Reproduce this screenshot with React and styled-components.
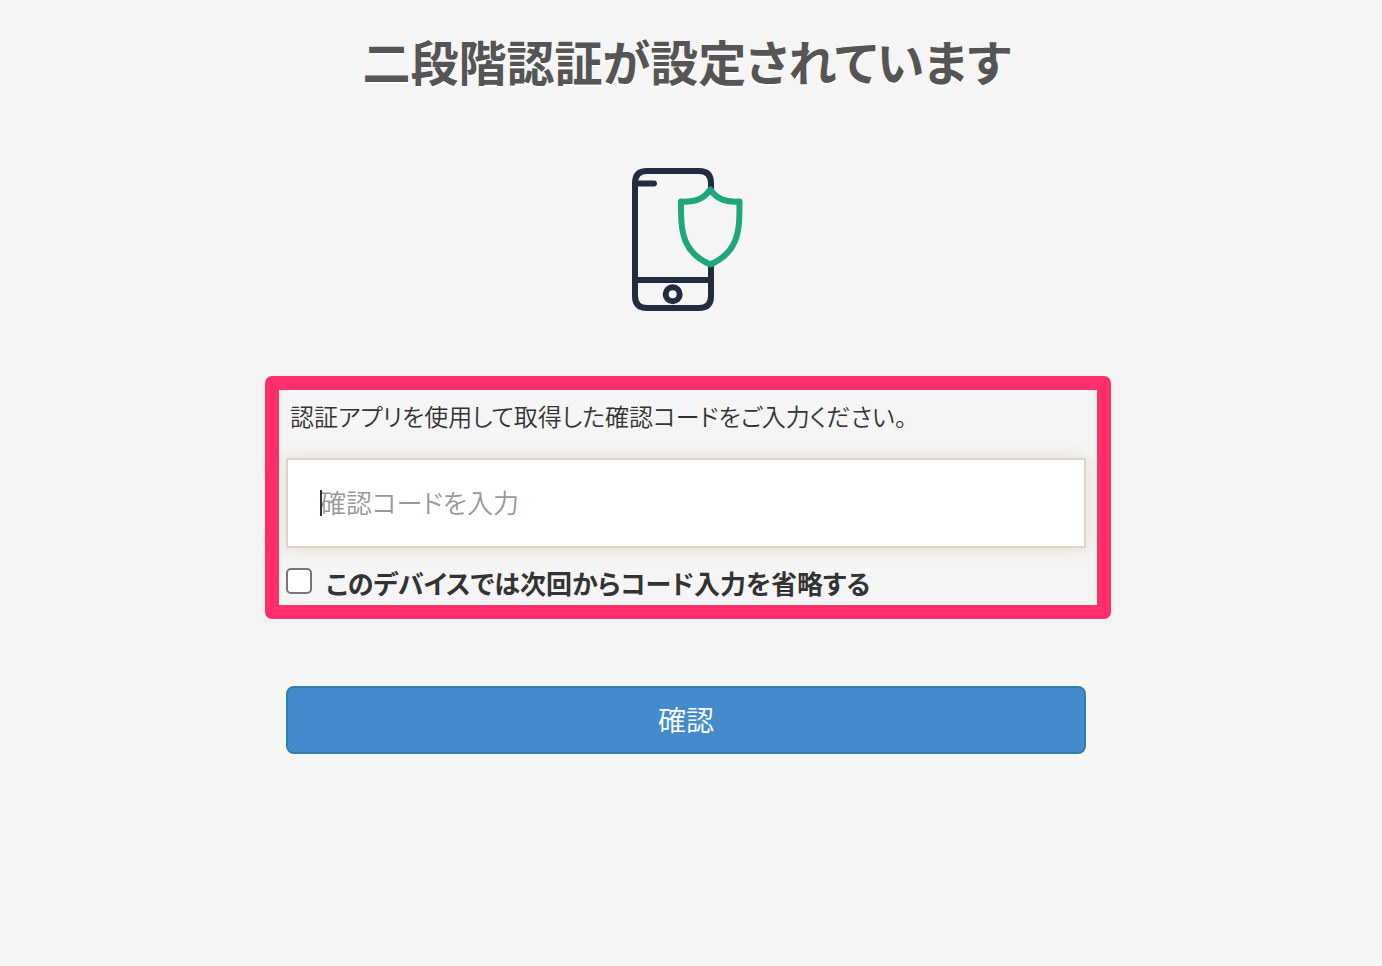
import React, { useState } from 'react';

import styled, { createGlobalStyle } from 'styled-components';

const Colors = {
  background: '#f5f5f5',
  title: '#555555',
  text: '#333333',
  placeholder: '#999999',
  highlight: '#ff2e6c',
  inputBorder: '#ddd5c9',
  inputGlow: 'rgba(190, 150, 90, 0.26)',
  blue: '#458bcc',
  blueBorder: '#2f7fa8',
  navy: '#232c3f',
  green: '#1ea77d',
};

const GlobalStyle = createGlobalStyle`
  * {
    box-sizing: border-box;
  }
  body {
    margin: 0;
    background-color: ${Colors.background};
    color: ${Colors.text};
    font-family: 'Noto Sans CJK JP', sans-serif;
    font-weight: 350;
    font-feature-settings: 'palt';
  }
`;

const Page = styled.main`
  display: flex;
  flex-direction: column;
  align-items: center;
  padding: 24px 22px 40px 16px;
`;

const Header = styled.header`
  display: flex;
  flex-direction: column;
  align-items: center;
  padding-right: 3px;
`;
const Title = styled.h1`
  margin: 0;
  font-size: 48px;
  line-height: 72px;
  font-weight: 700;
  color: ${Colors.title};
  text-shadow: 0 2px 0 #ffffff;
`;

const Icon = styled.svg`
  display: block;
  width: 112px;
  height: 146px;
  margin: 71px 0 63px;
`;

const Form = styled.form`
  width: 100%;
  max-width: 846px;
`;

// code input area
const CodeBox = styled.div`
  padding: 8px 11px 6px 7px;
  border: 14px solid ${Colors.highlight};
  border-radius: 7px;
`;
const CodeLabel = styled.label`
  display: block;
  padding-left: 4px;
  margin-bottom: 24px;
  font-size: 24px;
  line-height: 36px;
`;
const InputBox = styled.div`
  position: relative;
  margin-bottom: 19px;
`;
const CodeInput = styled.input`
  display: block;
  width: 100%;
  height: 90px;
  padding: 0 32px 4px;
  border: 2px solid ${Colors.inputBorder};
  border-radius: 0;
  outline: none;
  background-color: #ffffff;
  box-shadow: 0 0 16px ${Colors.inputGlow};
  font-family: inherit;
  font-size: 26px;
  font-weight: inherit;
  font-feature-settings: inherit;
  color: ${Colors.text};
  &::placeholder {
    color: ${Colors.placeholder};
    opacity: 1;
  }
`;
const Caret = styled.span`
  position: absolute;
  left: 34px;
  top: 32px;
  width: 2px;
  height: 26px;
  background-color: ${Colors.text};
`;

const CheckLabel = styled.label`
  display: flex;
  align-items: center;
  gap: 14px;
  font-size: 26px;
  line-height: 32px;
  font-weight: 700;
`;
const CheckBox = styled.input`
  appearance: none;
  flex: none;
  width: 26px;
  height: 26px;
  margin: 0 0 4px;
  border: 2px solid #767676;
  border-radius: 5px;
  background-color: #ffffff;
  &:checked {
    background-color: ${Colors.blue};
  }
`;

const ButtonRow = styled.div`
  padding: 67px 25px 0 21px;
`;
const SubmitButton = styled.button`
  display: block;
  width: 100%;
  height: 68px;
  padding: 0 0 2px;
  border: 2px solid ${Colors.blueBorder};
  border-radius: 8px;
  background-color: ${Colors.blue};
  color: #ffffff;
  font-family: inherit;
  font-size: 28px;
  font-weight: inherit;
  cursor: pointer;
`;

const PhoneShieldIcon = () => (
  <Icon viewBox='0 0 112 146' fill='none' strokeLinecap='round' strokeLinejoin='round' aria-hidden='true'>
    <g stroke={Colors.navy} strokeWidth='6'>
      <path d='M80 22V16Q80 4 68 4H16Q4 4 4 16V129Q4 141 16 141H68Q80 141 80 129V100' />
      <path d='M4 16.500H23M4 113H80' />
      <circle cx='41.7' cy='127.3' r='7' />
    </g>
    <path
      stroke={Colors.green}
      strokeWidth='6'
      d='M79.3 22.5C73 31.5 65 35.5 50 34.5C50 51 50 63 54.5 74C59 85 67.5 92.5 79.3 97.5C91 92.5 99.5 85 104 74C108.5 63 108.5 51 108.5 34.5C93.5 35.5 85.5 31.5 79.3 22.5Z'
    />
  </Icon>
);

const CodeField = ({ value, onChange }) => (
  <>
    <CodeLabel htmlFor='code'>認証アプリを使用して取得した確認コードをご入力ください。</CodeLabel>
    <InputBox>
      <CodeInput id='code' type='text' autoComplete='off' placeholder='確認コードを入力' value={value} onChange={onChange} />
      {value === '' && <Caret />}
    </InputBox>
  </>
);

const App = () => {
  const [code, setCode] = useState('');
  const [isSkip, setIsSkip] = useState(false);

  const handleSubmit = (e) => {
    e.preventDefault();
  };

  return (
    <>
      <GlobalStyle />
      <Page>
        <Header>
          <Title>二段階認証が設定されています</Title>
          <PhoneShieldIcon />
        </Header>
        <Form onSubmit={handleSubmit}>
          <CodeBox>
            <CodeField value={code} onChange={(e) => setCode(e.target.value)} />
            <CheckLabel>
              <CheckBox type='checkbox' checked={isSkip} onChange={() => setIsSkip(!isSkip)} />
              このデバイスでは次回からコード入力を省略する
            </CheckLabel>
          </CodeBox>
          <ButtonRow>
            <SubmitButton type='submit'>確認</SubmitButton>
          </ButtonRow>
        </Form>
      </Page>
    </>
  );
};

export default App;
